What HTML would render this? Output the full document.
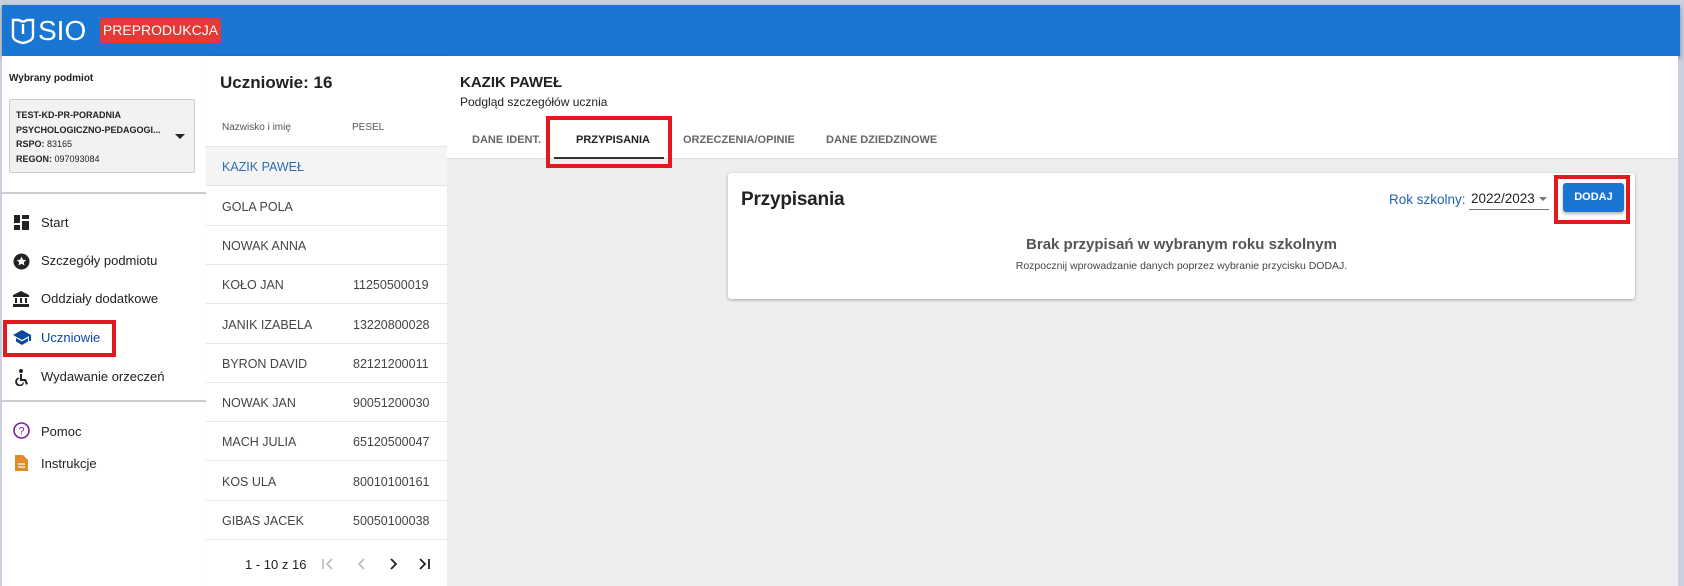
<!DOCTYPE html>
<html><head><meta charset="utf-8"><style>
*{margin:0;padding:0;box-sizing:border-box}
body{width:1684px;height:586px;overflow:hidden;background:#c8d0e0;font-family:"Liberation Sans",Arial,sans-serif;position:relative;color:#222}
.a{position:absolute;white-space:nowrap}
#hdr{left:2px;top:5px;width:1678px;height:51px;background:#1976d2;box-shadow:0 2px 4px rgba(0,0,0,.4)}
#side{left:2px;top:56px;width:204px;height:530px;background:#fff}
#list{left:206px;top:56px;width:241px;height:530px;background:#fff;box-shadow:2px 0 4px rgba(0,0,0,.12)}
#main{left:447px;top:56px;width:1231px;height:530px;background:#eeeeee}
#mtop{left:447px;top:56px;width:1231px;height:103px;background:#fff;border-bottom:1px solid #ddd}
.mi{font-size:13px;color:#222;left:41px}
.row{left:206px;width:241px;height:39px;border-bottom:1px solid #e6e6e6;font-size:12.5px;color:#444}
.row span{position:absolute;top:13px}
.tab{font-size:11px;font-weight:bold;color:#666;top:134px}
.red{border:4px solid #e3191f}
</style></head><body>
<div class="a" id="hdr"></div>
<svg class="a" style="left:10px;top:17px" width="26" height="28" viewBox="0 0 26 28"><path d="M3 3 L9 3 Q13 6 17 3 L23 3 L23 19 Q23 24 13 26 Q3 24 3 19 Z" fill="none" stroke="#fff" stroke-width="2.4"/><path d="M13 7 L13 17" stroke="#fff" stroke-width="2.4"/></svg>
<div class="a" style="left:38px;top:15px;font-size:28px;color:#fff">SIO</div>
<div class="a" style="left:100px;top:18px;width:121px;height:25px;background:#e53935;border-radius:3px;color:#fff;font-size:14px;line-height:25px;text-align:center">PREPRODUKCJA</div>

<div class="a" id="side"></div>
<div class="a" style="left:9px;top:73px;font-size:10px;font-weight:bold">Wybrany podmiot</div>
<div class="a" style="left:9px;top:99px;width:186px;height:74px;background:#f2f2f2;border:1px solid #ccc;border-radius:2px"></div>
<div class="a" style="left:16px;top:108px;font-size:9px;font-weight:bold;line-height:14.5px">TEST-KD-PR-PORADNIA<br>PSYCHOLOGICZNO-PEDAGOGI...<br>RSPO: <span style="font-weight:normal">83165</span><br>REGON: <span style="font-weight:normal">097093084</span></div>
<div class="a" style="left:175px;top:134px;width:0;height:0;border-left:5px solid transparent;border-right:5px solid transparent;border-top:5px solid #222"></div>
<div class="a" style="left:2px;top:192px;width:204px;height:2px;background:#ccc"></div>
<svg class="a" style="left:14px;top:215px" width="15" height="15" viewBox="0 0 15 15" fill="#222"><rect x="0" y="0" width="6" height="8"/><rect x="8" y="0" width="7" height="4"/><rect x="8" y="6" width="7" height="9"/><rect x="0" y="10" width="6" height="5"/></svg>
<div class="a mi" style="top:215px">Start</div>
<svg class="a" style="left:13px;top:253px" width="17" height="17" viewBox="0 0 17 17"><circle cx="8.5" cy="8.5" r="8" fill="#222"/><path d="M8.5 3.5l1.4 3.2 3.4.3-2.6 2.2.8 3.3-3-1.8-3 1.8.8-3.3-2.6-2.2 3.4-.3z" fill="#fff"/></svg>
<div class="a mi" style="top:253px">Szczegóły podmiotu</div>
<svg class="a" style="left:13px;top:291px" width="16" height="16" viewBox="0 0 16 16" fill="#222"><path d="M8 0L0 4v2h16V4z"/><rect x="2" y="7" width="2" height="5"/><rect x="7" y="7" width="2" height="5"/><rect x="12" y="7" width="2" height="5"/><rect x="0" y="13" width="16" height="3"/></svg>
<div class="a mi" style="top:291px">Oddziały dodatkowe</div>
<div class="a red" style="left:3px;top:320px;width:113px;height:37px"></div>
<svg class="a" style="left:13px;top:330px" width="18" height="15" viewBox="0 0 18 15" fill="#0d47a1"><path d="M9 0L0 5l9 5 7-4v5h2V5z"/><path d="M3 8v3.5L9 15l6-3.5V8l-6 3.4z"/></svg>
<div class="a mi" style="top:330px;color:#0d47a1">Uczniowie</div>
<svg class="a" style="left:14px;top:369px" width="15" height="17" viewBox="0 0 15 17" fill="#222"><circle cx="7" cy="2" r="2"/><path d="M6 5h2v5h4l2 5-2 .8-1.5-3.8H6z"/><path d="M4.5 8.5A4.5 4.5 0 1 0 10 14l-1-1a3 3 0 1 1-3.6-3.3z"/></svg>
<div class="a mi" style="top:369px">Wydawanie orzeczeń</div>
<div class="a" style="left:2px;top:400px;width:204px;height:2px;background:#ccc"></div>
<svg class="a" style="left:13px;top:422px" width="17" height="17" viewBox="0 0 17 17"><circle cx="8.5" cy="8.5" r="7.5" fill="none" stroke="#7b1fa2" stroke-width="1.6"/><text x="8.5" y="12.5" font-size="11" text-anchor="middle" fill="#7b1fa2" font-family="Liberation Sans">?</text></svg>
<div class="a mi" style="top:424px">Pomoc</div>
<svg class="a" style="left:15px;top:455px" width="13" height="16" viewBox="0 0 13 16"><path d="M0 0h8l5 5v11H0z" fill="#e08a2a"/><path d="M3 9h7M3 12h7" stroke="#fff" stroke-width="1.2"/></svg>
<div class="a mi" style="top:456px">Instrukcje</div>

<div class="a" id="list"></div>
<div class="a" style="left:220px;top:73px;font-size:17px;font-weight:bold;color:#222">Uczniowie: 16</div>
<div class="a" style="left:222px;top:122px;font-size:10px;color:#555">Nazwisko i imię</div>
<div class="a" style="left:352px;top:122px;font-size:10px;color:#555">PESEL</div>
<div class="a" style="left:206px;top:146px;width:241px;height:1px;background:#e6e6e6"></div>
<div class="a row" style="top:147px;background:#f4f4f4"><span style="left:16px;color:#2a6fb3">KAZIK PAWEŁ</span></div>
<div class="a row" style="top:187px"><span style="left:16px">GOLA POLA</span></div>
<div class="a row" style="top:226px"><span style="left:16px">NOWAK ANNA</span></div>
<div class="a row" style="top:265px"><span style="left:16px">KOŁO JAN</span><span style="left:147px">11250500019</span></div>
<div class="a row" style="top:305px"><span style="left:16px">JANIK IZABELA</span><span style="left:147px">13220800028</span></div>
<div class="a row" style="top:344px"><span style="left:16px">BYRON DAVID</span><span style="left:147px">82121200011</span></div>
<div class="a row" style="top:383px"><span style="left:16px">NOWAK JAN</span><span style="left:147px">90051200030</span></div>
<div class="a row" style="top:422px"><span style="left:16px">MACH JULIA</span><span style="left:147px">65120500047</span></div>
<div class="a row" style="top:462px"><span style="left:16px">KOS ULA</span><span style="left:147px">80010100161</span></div>
<div class="a row" style="top:501px"><span style="left:16px">GIBAS JACEK</span><span style="left:147px">50050100038</span></div>
<div class="a" style="left:245px;top:557px;font-size:13px;color:#222">1 - 10 z 16</div>
<svg class="a" style="left:322px;top:558px" width="12" height="12" viewBox="0 0 12 12" fill="none" stroke="#bbb" stroke-width="1.6"><path d="M1 1v10M10 1L5 6l5 5"/></svg>
<svg class="a" style="left:356px;top:558px" width="12" height="12" viewBox="0 0 12 12" fill="none" stroke="#bbb" stroke-width="1.6"><path d="M8 1L3 6l5 5"/></svg>
<svg class="a" style="left:387px;top:558px" width="12" height="12" viewBox="0 0 12 12" fill="none" stroke="#222" stroke-width="1.8"><path d="M4 1l5 5-5 5"/></svg>
<svg class="a" style="left:418px;top:558px" width="12" height="12" viewBox="0 0 12 12" fill="none" stroke="#222" stroke-width="1.8"><path d="M2 1l5 5-5 5M11 1v10"/></svg>

<div class="a" id="main"></div>
<div class="a" id="mtop"></div>
<div class="a" style="left:460px;top:74px;font-size:15px;font-weight:bold;color:#222">KAZIK PAWEŁ</div>
<div class="a" style="left:460px;top:95px;font-size:12px;color:#222">Podgląd szczegółów ucznia</div>
<div class="a tab" style="left:472px">DANE IDENT.</div>
<div class="a tab" style="left:576px;color:#222">PRZYPISANIA</div>
<div class="a" style="left:554px;top:157px;width:110px;height:2px;background:#333"></div>
<div class="a red" style="left:546px;top:116px;width:126px;height:52px"></div>
<div class="a tab" style="left:683px">ORZECZENIA/OPINIE</div>
<div class="a tab" style="left:826px">DANE DZIEDZINOWE</div>

<div class="a" style="left:728px;top:173px;width:907px;height:126px;background:#fff;border-radius:3px;box-shadow:0 1px 3px rgba(0,0,0,.3)"></div>
<div class="a" style="left:741px;top:189px;font-size:19px;color:#222;font-weight:bold;letter-spacing:-0.2px">Przypisania</div>
<div class="a" style="left:1389px;top:192px;font-size:13.5px;color:#1e63b0">Rok szkolny:</div>
<div class="a" style="left:1471px;top:191px;font-size:13.5px;color:#222">2022/2023</div>
<div class="a" style="left:1539px;top:197px;width:0;height:0;border-left:4px solid transparent;border-right:4px solid transparent;border-top:4px solid #777"></div>
<div class="a" style="left:1469px;top:209px;width:80px;height:1px;background:#777"></div>
<div class="a red" style="left:1554px;top:175px;width:76px;height:49px"></div>
<div class="a" style="left:1563px;top:183px;width:61px;height:29px;background:#1976d2;border-radius:3px;box-shadow:0 2px 3px rgba(0,0,0,.3);color:#fff;font-size:11px;font-weight:bold;line-height:29px;text-align:center">DODAJ</div>
<div class="a" style="left:728px;width:907px;top:236px;text-align:center;font-size:15px;color:#555;font-weight:bold">Brak przypisań w wybranym roku szkolnym</div>
<div class="a" style="left:728px;width:907px;top:260px;text-align:center;font-size:10.5px;color:#444">Rozpocznij wprowadzanie danych poprzez wybranie przycisku DODAJ.</div>
</body></html>
